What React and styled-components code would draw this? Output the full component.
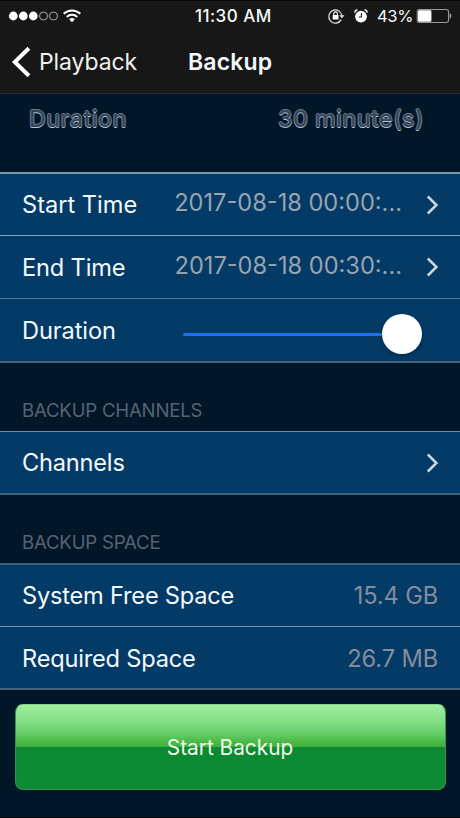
import React from "react";
import styled, { createGlobalStyle } from "styled-components";

const GlobalStyle = createGlobalStyle`
  * { box-sizing: border-box; }
  body { margin: 0; background: #02162a; }
`;

const Screen = styled.div`
  width: 460px;
  height: 818px;
  overflow: hidden;
  display: flex;
  flex-direction: column;
  background: #02162a;
  border-bottom: 1px solid #000;
  font-family: Inter, "Liberation Sans", sans-serif;
  color: #f4f9fd;
`;

const TopBar = styled.header`
  height: 94px;
  flex: none;
  background: #171717;
  border-top: 1px solid #050505;
  border-bottom: 1px solid #1b2f42;
`;

const StatusBar = styled.div`
  height: 30px;
  display: grid;
  grid-template-columns: 195px 83px 1fr;
  align-items: center;
`;

const Signal = styled.div`
  display: flex;
  align-items: center;
  padding-left: 8px;
`;

const Clock = styled.span`
  font-size: 17px;
  font-weight: 500;
  letter-spacing: 0.45px;
  line-height: 30px;
  white-space: nowrap;
`;

const StatusIcons = styled.div`
  display: flex;
  align-items: center;
  padding-left: 49px;
`;

const AlarmSlot = styled.span`
  display: flex;
  margin-left: 8px;
`;

const Percent = styled.span`
  width: 39px;
  margin-left: 8px;
  font-size: 16.5px;
  letter-spacing: -0.3px;
  line-height: 30px;
`;

const NavBar = styled.nav`
  height: 61px;
  display: grid;
  grid-template-columns: 188px 1fr;
  align-items: center;
`;

const BackButton = styled.button`
  display: flex;
  align-items: center;
  gap: 8px;
  padding: 0 0 0 11px;
  border: 0;
  background: none;
  color: #f0f0f0;
  font: 400 23px/60px Inter, "Liberation Sans", sans-serif;
  letter-spacing: -0.1px;
`;

const Title = styled.h1`
  margin: 0;
  font-size: 23px;
  font-weight: 600;
  line-height: 60px;
  letter-spacing: 0.15px;
`;

const Summary = styled.section`
  height: 78px;
  flex: none;
  display: flex;
  justify-content: space-between;
  padding: 9px 36px 0 29px;
  font-size: 23.2px;
  font-weight: 500;
  line-height: 32px;
  letter-spacing: 0.42px;
  color: #344558;
  text-shadow: 0 1px 0 #b4c2d2, 0 -1px 0 #67778a, 1px 0 0 #526274, -1px 0 0 #526274;
`;

const List = styled.section`
  flex: none;
  border-bottom: 2px solid #45627c;
`;

const Row = styled.div`
  height: ${(p) => p.$height}px;
  display: flex;
  justify-content: space-between;
  background: #033a66;
  border-top: ${(p) => p.$line || 1}px solid ${(p) => p.$edge || "#6f8ca3"};
`;

const Label = styled.span`
  padding-left: 22px;
  font-size: 23.6px;
  line-height: ${(p) => p.$leading || 61}px;
  letter-spacing: ${(p) => p.$spacing || 0}px;
  height: 60px;
  white-space: nowrap;
`;

const Value = styled.span`
  padding-right: 22px;
  font-size: 23.6px;
  line-height: ${(p) => p.$leading || 61}px;
  height: 60px;
  letter-spacing: -0.1px;
  color: #858c9b;
  white-space: nowrap;
`;

const Disclosure = styled.div`
  display: flex;
  align-items: center;
  gap: 24px;
  padding-right: 20px;
`;

const DateText = styled.span`
  font-size: 23.6px;
  line-height: ${(p) => p.$leading || 56}px;
  height: 60px;
  color: #98a3b0;
  white-space: nowrap;
`;

const Slider = styled.div`
  width: 239px;
  height: 40px;
  margin: 14.5px 38px 0 0;
  display: flex;
  align-items: center;
`;

const Track = styled.div`
  flex: 1;
  height: 3px;
  margin-top: 2px;
  border-radius: 2px 0 0 2px;
  background: #1775f2;
`;

const Thumb = styled.div`
  width: 40px;
  height: 40px;
  border-radius: 50%;
  background: #fff;
  box-shadow: 0 2px 4px rgba(0, 12, 28, 0.3);
`;

const SectionTitle = styled.h2`
  height: 68px;
  flex: none;
  margin: 0;
  padding: 33px 0 0 22px;
  font-size: 18.6px;
  font-weight: 400;
  line-height: 29px;
  letter-spacing: -0.2px;
  color: #566371;
`;

const StartButton = styled.button`
  flex: none;
  width: 431px;
  height: 86px;
  margin: 14px 0 0 15px;
  padding: 3px 1px 0 0;
  border: 1px solid #36964a;
  border-top-color: #7fd886;
  border-radius: 8px;
  background: linear-gradient(#a2eda0 0, #85df87 18%, #69cf6b 33%, #4fbd4c 42%, #40b03c 50%, #0c8932 50%, #0d8b35 100%);
  color: #f2fbea;
  font: 400 20.8px/1 Inter, "Liberation Sans", sans-serif;
`;

function SignalIcon() {
  return (
    <svg width="75" height="18" viewBox="0 0 75 18" fill="none">
      {[5.3, 15.3, 25.3].map((x) => <circle key={x} cx={x} cy="9" r="4.4" fill="#fff" />)}
      {[35.5, 45.5].map((x) => <circle key={x} cx={x} cy="9" r="4" stroke="#bbb" strokeWidth="0.9" />)}
      <path d="M55.7 6.7a12.2 12.2 0 0 1 16.6 0M58.7 9.9a7.8 7.8 0 0 1 10.6 0" stroke="#fff" strokeWidth="2" />
      <path d="M61.2 12.2a4.2 4.2 0 0 1 5.6 0L64 15.2z" fill="#fff" />
    </svg>
  );
}

function LockIcon() {
  return (
    <svg width="18" height="18" viewBox="0 0 18 18" fill="none">
      <path d="M14.2 12.6a6.6 6.6 0 1 1 .7-4" stroke="#e4e4e4" strokeWidth="1.2" />
      <path d="M12.3 8.2h5.2l-2.6 3z" fill="#e4e4e4" />
      <rect x="5.7" y="8" width="5.8" height="4.5" rx=".6" fill="#fff" />
      <path d="M6.8 8V6.7a1.8 1.8 0 0 1 3.6 0V8" stroke="#fff" strokeWidth="1.1" />
    </svg>
  );
}

function AlarmIcon() {
  return (
    <svg width="16" height="16" viewBox="0 0 16 16" fill="none">
      <circle cx="8" cy="8.6" r="5.9" fill="#fff" />
      <path d="M1.6 4.6a3.4 3.4 0 0 1 2.8-2.8M14.4 4.6a3.4 3.4 0 0 0-2.8-2.8" stroke="#fff" strokeWidth="1.4" />
      <path d="M8.4 5v4H5.8" stroke="#222" strokeWidth="1.1" />
    </svg>
  );
}

function BatteryIcon() {
  return (
    <svg width="37" height="16" viewBox="0 0 37 16" fill="none">
      <rect x="1.2" y="1.5" width="31.4" height="13" rx="2.5" stroke="#999" strokeWidth="1.1" />
      <rect x="2" y="2.2" width="13.4" height="11.6" rx="1.3" fill="#fff" />
      <path d="M33.6 5.3c2.4.7 2.4 4.7 0 5.4z" fill="#999" />
    </svg>
  );
}

function BackIcon() {
  return (
    <svg width="20" height="32" viewBox="0 0 20 32" fill="none">
      <path d="M17.9 2.2L3.8 16l14.1 13.8" stroke="#fff" strokeWidth="4" />
    </svg>
  );
}

function Chevron() {
  return (
    <svg width="14" height="20" viewBox="0 0 14 20" fill="none">
      <path d="M1.8 1.5L10.4 10l-8.6 8.5" stroke="#c9d6e1" strokeWidth="2.5" />
    </svg>
  );
}

export default function App() {
  return (
    <>
      <GlobalStyle />
      <Screen>
        <TopBar>
          <StatusBar>
            <Signal><SignalIcon /></Signal>
            <Clock>11:30 AM</Clock>
            <StatusIcons>
              <LockIcon />
              <AlarmSlot><AlarmIcon /></AlarmSlot>
              <Percent>43%</Percent>
              <BatteryIcon />
            </StatusIcons>
          </StatusBar>
          <NavBar>
            <BackButton><BackIcon />Playback</BackButton>
            <Title>Backup</Title>
          </NavBar>
        </TopBar>
        <Summary>
          <span>Duration</span>
          <span>30 minute(s)</span>
        </Summary>
        <List>
          <Row $height={63} $line={2} $edge="#7c94aa">
            <Label>Start Time</Label>
            <Disclosure><DateText>2017-08-18 00:00:...</DateText><Chevron /></Disclosure>
          </Row>
          <Row $height={63} $edge="#7fa9c6">
            <Label $spacing={-0.15} $leading={63}>End Time</Label>
            <Disclosure><DateText $leading={58}>2017-08-18 00:30:...</DateText><Chevron /></Disclosure>
          </Row>
          <Row $height={63} $edge="#547c9b">
            <Label $spacing={-0.1} $leading={64}>Duration</Label>
            <Slider><Track /><Thumb /></Slider>
          </Row>
        </List>
        <SectionTitle>BACKUP CHANNELS</SectionTitle>
        <List>
          <Row $height={62}>
            <Label $spacing={-0.2} $leading={62}>Channels</Label>
            <Disclosure><Chevron /></Disclosure>
          </Row>
        </List>
        <SectionTitle>BACKUP SPACE</SectionTitle>
        <List>
          <Row $height={63} $line={2} $edge="#3b5f7e">
            <Label $spacing={-0.2}>System Free Space</Label>
            <Value>15.4 GB</Value>
          </Row>
          <Row $height={62} $edge="#7a93a9">
            <Label $spacing={-0.2} $leading={63}>Required Space</Label>
            <Value $leading={63}>26.7 MB</Value>
          </Row>
        </List>
        <StartButton>Start Backup</StartButton>
      </Screen>
    </>
  );
}
